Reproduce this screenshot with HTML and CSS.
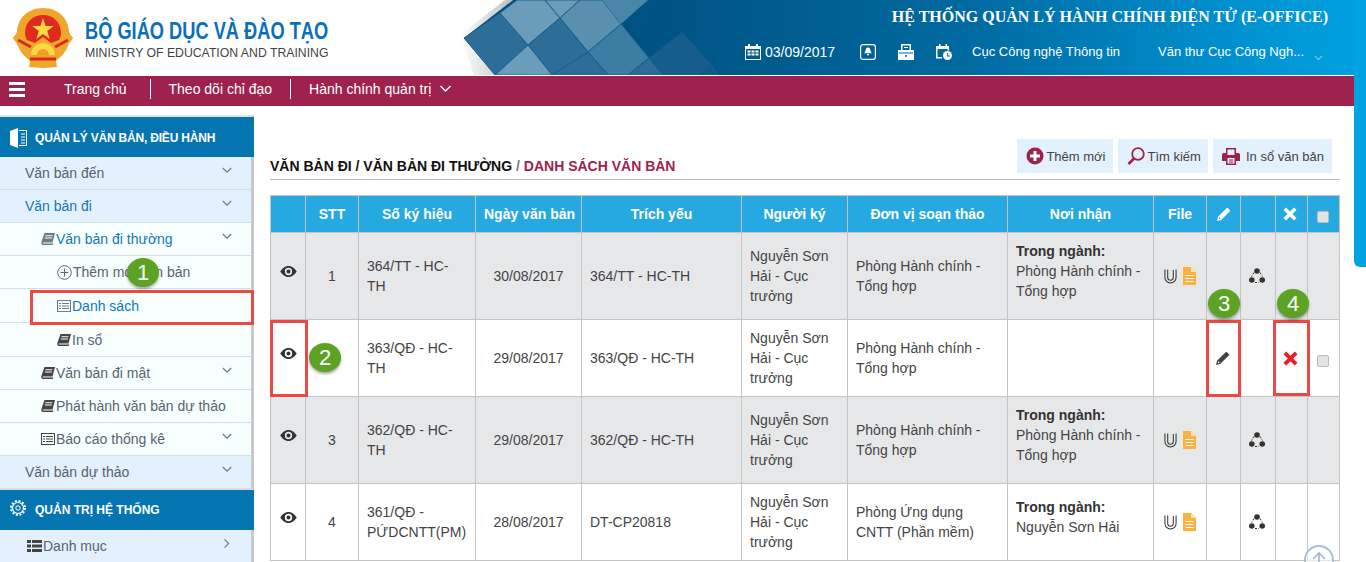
FILE: index.html
```html
<!DOCTYPE html>
<html lang="vi">
<head>
    <meta charset="UTF-8">
    <meta name="viewport" content="width=device-width, initial-scale=1.0">
    <title>Danh sách văn bản</title>
    <link rel="stylesheet" href="styles.css">
</head>
<body>
    <svg class="defs" width="0" height="0" aria-hidden="true">
        <symbol id="i-eye" viewBox="0 0 18 12"><path fill-rule="evenodd" d="M9 0c4 0 7 3 9 6-2 3-5 6-9 6S2 9 0 6c2-3 5-6 9-6zm0 2a4 4 0 1 0 0 8 4 4 0 0 0 0-8zm0 1.8a2.2 2.2 0 1 1 0 4.4 2.2 2.2 0 0 1 0-4.4z"/></symbol>
        <symbol id="i-pencil" viewBox="0 0 14 14"><path d="M0 14l1-4.2L9.600 1.200a1 1 0 0 1 1.400 0l1.800 1.800a1 1 0 0 1 0 1.400L4.200 13zM2.300 10.200l-.6 2.100 2.100-.6z"/></symbol>
        <symbol id="i-times" viewBox="0 0 14 14"><path d="M3 .5L7 4.500 11 .5l2.500 2.500-4 4 4 4-2.500 2.500-4-4-4 4L.5 11l4-4-4-4z"/></symbol>
        <symbol id="i-clip" viewBox="0 0 14 16"><path fill="none" stroke="#333" stroke-width="1.100" d="M1 1v8.500a6 6 0 0 0 12 0V1M4 1v8.500a3 3 0 0 0 6 0V1.500"/></symbol>
        <symbol id="i-doc" viewBox="0 0 13 18"><path fill="#fbb040" d="M0 0h8l5 5v13H0z"/><path fill="#fde3b5" d="M8 0l5 5H8z"/><path stroke="#fff" d="M2.500 8.500h8M2.500 11.500h8M2.500 14.500h8"/></symbol>
        <symbol id="i-share" viewBox="0 0 16 16"><circle cx="8" cy="3" r="2.800" fill="#333"/><circle cx="2.800" cy="12" r="2.800" fill="#333"/><circle cx="13.200" cy="12" r="2.800" fill="#333"/><path fill="none" stroke="#333" stroke-dasharray="2 1.500" d="M5 4.500L2.500 8.500M11 4.500l2.500 4M6 14.500h4"/></symbol>
        <symbol id="i-book" viewBox="0 0 14 12"><path d="M3.500 0H14l-2.500 9.500H2.200C1.600 9.500 1.500 10.500 2.200 10.500H11.500l.4-.8.300.6-.5 1.700H2C.5 12 0 10.500.4 9zM4.500 2.200l-.2 1h7l.2-1zM4 4.500l-.2 1h7l.2-1z"/></symbol>
        <symbol id="i-list" viewBox="0 0 14 12"><path fill-rule="evenodd" d="M0 0h14v12H0zm1 1v10h12V1zM2 3h2v1H2zm3 0h7v1H5zM2 5.500h2v1H2zm3 0h7v1H5zM2 8h2v1H2zm3 0h7v1H5z"/></symbol>
        <symbol id="i-chev" viewBox="0 0 12 8"><path fill="none" stroke="currentColor" stroke-width="1.400" d="M1 1l5 5 5-5"/></symbol>
    </svg>

    <div class="page">
        <header class="topbar">
            <svg class="topbar-art" width="1366" height="75" viewBox="0 0 1366 75" aria-hidden="true">
                <defs>
                    <linearGradient id="band" x1="0" x2="1" y1="0" y2="0">
                        <stop offset="0" stop-color="#004f7e"/>
                        <stop offset="0.2" stop-color="#005283"/>
                        <stop offset="0.55" stop-color="#00699f"/>
                        <stop offset="0.85" stop-color="#0090cf"/>
                        <stop offset="1" stop-color="#00a2e0"/>
                    </linearGradient>
                    <linearGradient id="shade" x1="0" x2="1" y1="0" y2="0">
                        <stop offset="0" stop-color="#ffffff"/>
                        <stop offset="1" stop-color="#bdbdbd"/>
                    </linearGradient>
                </defs>
                <path fill="url(#shade)" d="M460 35L505 0h8L464 38l32 37h-22z"/>
                <path fill="url(#band)" d="M513 0L464 38l32 37h870V0z"/>
                <g stroke="#17618f">
                    <path fill="#2d6e99" d="M464 38l36-25 28 32-33 30z"/>
                    <path fill="#6b9dbb" d="M500 13L517 0h28l15 18-32 27z"/>
                    <path fill="#6b9dbb" d="M545 0h35l-20 18z"/>
                    <path fill="#5a8fb0" d="M560 18l20-18h22l19 24-33 28z"/>
                    <path fill="#2d6e99" d="M528 45l32-27 28 34-36 23z"/>
                    <path fill="#6b9dbb" d="M495 75l33-30 24 30z"/>
                    <path fill="#3d7ca3" d="M588 52l33-28 28 34-21 17h-20z"/>
                    <path fill="#2d6e99" d="M552 75l36-23 20 23z"/>
                    <path fill="#4a86a8" d="M602 0h46l-27 24z" stroke="none"/>
                    <path fill="#2d6e99" d="M628 75l21-17 14 17z"/>
                    <path fill="#155d8a" d="M649 58l33-26 28 31-13 12h-34z" stroke="none"/>
                    <path fill="#0f5a88" d="M697 75l13-12 8 12z"/>
                </g>
            </svg>
            <a class="brand" href="#">
                <svg class="emblem" width="62" height="62" viewBox="0 0 62 62" aria-hidden="true">
                    <path fill="#eea72b" d="M31 1c16 0 25 11 26 23 0 3 3 5 4 7-1 3-4 4-5 8-3 8-9 12-12 15l1 6-14 1-14-1 1-6c-3-3-9-7-12-15-1-4-4-5-5-8 1-2 4-4 4-7C6 12 15 1 31 1z"/>
                    <path fill="#e02a20" d="M31 8c10 0 18 7 18 18 0 3-1 5-2 7l-8 3-8-6-8 6-8-3c-1-2-2-4-2-7C13 15 21 8 31 8z"/>
                    <path fill="#fbd743" d="M31 11l2.600 8h8.200l-6.600 5 2.500 8-6.700-5-6.700 5 2.500-8-6.600-5h8.200z"/>
                    <path fill="#fbd743" d="M19 48a12 12 0 0 1 24 0z"/>
                    <path fill="#f39c1f" d="M25 48a6 6 0 0 1 12 0z"/>
                    <path fill="none" stroke="#d92a20" stroke-width="3" d="M6 33l13 7M56 33l-13 7M18 52h26"/>
                </svg>
                <span class="brand-text">
                    <span class="brand-vi">BỘ GIÁO DỤC VÀ ĐÀO TẠO</span>
                    <span class="brand-en">MINISTRY OF EDUCATION AND TRAINING</span>
                </span>
            </a>
            <div class="topbar-right">
                <div class="app-title">HỆ THỐNG QUẢN LÝ HÀNH CHÍNH ĐIỆN TỬ (E-OFFICE)</div>
                <div class="topbar-info">
                    <span class="today">
                        <svg width="16" height="16" viewBox="0 0 16 16" aria-hidden="true"><path fill="#fff" fill-rule="evenodd" d="M3 0h2v2h6V0h2v2h3v14H0V2h3zM1 5v10h14V5zm1.500 1.500h3v2h-3zm4 0h3v2h-3zm4 0h3v2h-3zm-8 3h3v2h-3zm4 0h3v2h-3zm4 0h3v2h-3z"/></svg>
                        03/09/2017
                    </span>
                    <svg class="info-icon first" width="16" height="16" viewBox="0 0 16 16" aria-hidden="true"><rect x=".6" y=".6" width="14.800" height="14.800" rx="2.500" fill="none" stroke="#fff" stroke-width="1.200"/><path fill="#fff" d="M8 3.500c1.800 0 2.300 1.500 2.500 3 .2 1.200.8 2 1.300 2.700H4.200c.5-.7 1.100-1.500 1.300-2.700.2-1.500.7-3 2.500-3zM6.800 10h2.400L8 12z"/></svg>
                    <svg class="info-icon" width="16" height="16" viewBox="0 0 16 16" aria-hidden="true"><path fill="#fff" fill-rule="evenodd" d="M3 0h10v6h3v10H0V6h3zM4.500 1.500V6h7V1.500zM6 3h4v1H6zM1 9.500h14V8.500H1zM8 11a1 1 0 1 0 0 2 1 1 0 0 0 0-2z"/></svg>
                    <svg class="info-icon" width="16" height="16" viewBox="0 0 16 16" aria-hidden="true"><path fill="#fff" fill-rule="evenodd" d="M3 0h1.500v2h5V0H11v2h2v4.500h-1.500V5h-10v8H6v1.500H0V2h3z"/><circle cx="11.500" cy="11.500" r="4.500" fill="#fff"/><path fill="none" stroke="#0077ad" stroke-width="1.200" d="M11.500 9v3h2.500"/></svg>
                    <span class="org">Cục Công nghệ Thông tin</span>
                    <span class="user">Văn thư Cục Công Ngh...</span>
                    <svg class="user-chev" width="9" height="6" aria-hidden="true"><use href="#i-chev"/></svg>
                </div>
            </div>
        </header>

        <div class="wrap">
            <nav class="mainnav">
                <span class="burger"><i></i><i></i><i></i></span>
                <a href="#" class="nav-link first">Trang chủ</a>
                <a href="#" class="nav-link">Theo dõi chỉ đạo</a>
                <a href="#" class="nav-link last">Hành chính quản trị
                    <svg width="13" height="8" aria-hidden="true"><use href="#i-chev"/></svg>
                </a>
            </nav>

            <div class="body">
                <aside class="sidebar">
                    <div class="side-head first">
                        <svg width="17" height="20" viewBox="0 0 17 20" aria-hidden="true"><path fill="#fff" d="M0 3l8-3v20l-8-3z"/><path fill="none" stroke="#fff" d="M9 2.500h7.500v15H9M11 6h4M11 9h4M11 12h4M11 15h4"/></svg>
                        QUẢN LÝ VĂN BẢN, ĐIỀU HÀNH
                    </div>
                    <a href="#" class="side-item lv1">Văn bản đến<svg class="chev" width="10" height="7"><use href="#i-chev"/></svg></a>
                    <a href="#" class="side-item lv1 active">Văn bản đi<svg class="chev" width="10" height="7"><use href="#i-chev"/></svg></a>
                    <a href="#" class="side-item lv2 active">
                        <svg class="ico faded" width="14" height="12"><use href="#i-book"/></svg>Văn bản đi thường<svg class="chev" width="10" height="7"><use href="#i-chev"/></svg>
                    </a>
                    <a href="#" class="side-item lv3">
                        <svg class="ico" width="15" height="15" viewBox="0 0 15 15"><circle cx="7.500" cy="7.500" r="6.800" fill="none" stroke="#666"/><path stroke="#666" d="M7.500 3.500v8M3.500 7.500h8"/></svg>Thêm mới văn bản
                    </a>
                    <a href="#" class="side-item lv3 active">
                        <svg class="ico faded" width="14" height="12"><use href="#i-list"/></svg>Danh sách
                    </a>
                    <a href="#" class="side-item lv3">
                        <svg class="ico" width="14" height="12"><use href="#i-book"/></svg>In sổ
                    </a>
                    <a href="#" class="side-item lv2">
                        <svg class="ico" width="14" height="12"><use href="#i-book"/></svg>Văn bản đi mật<svg class="chev" width="10" height="7"><use href="#i-chev"/></svg>
                    </a>
                    <a href="#" class="side-item lv2">
                        <svg class="ico" width="14" height="12"><use href="#i-book"/></svg>Phát hành văn bản dự thảo
                    </a>
                    <a href="#" class="side-item lv2">
                        <svg class="ico" width="14" height="12"><use href="#i-list"/></svg>Báo cáo thống kê<svg class="chev" width="10" height="7"><use href="#i-chev"/></svg>
                    </a>
                    <a href="#" class="side-item lv1">Văn bản dự thảo<svg class="chev" width="10" height="7"><use href="#i-chev"/></svg></a>
                    <div class="side-head second">
                        <svg class="gear" width="16" height="16" viewBox="0 0 16 16" aria-hidden="true"><circle cx="8" cy="8" r="5.500" fill="none" stroke="#fff" stroke-width="1.200"/><circle cx="8" cy="8" r="2.200" fill="none" stroke="#fff"/><circle cx="8" cy="8" r="7" fill="none" stroke="#fff" stroke-width="2" stroke-dasharray="2 1.700"/></svg>
                        QUẢN TRỊ HỆ THỐNG
                    </div>
                    <a href="#" class="side-item lv1 has-ico">
                        <svg class="ico" width="15" height="12" viewBox="0 0 15 12"><path d="M0 0h4v3H0zm5 0h10v3H5zM0 4.500h4v3H0zm5 0h10v3H5zM0 9h4v3H0zm5 0h10v3H5z"/></svg>Danh mục<svg class="chev right" width="10" height="7"><use href="#i-chev"/></svg>
                    </a>
                </aside>

                <main class="content">
                    <div class="title-row">
                        <h1 class="crumb">VĂN BẢN ĐI / VĂN BẢN ĐI THƯỜNG <span class="sep">/</span> <span class="here">DANH SÁCH VĂN BẢN</span></h1>
                        <div class="actions">
                            <button class="btn add">
                                <svg width="18" height="18" viewBox="0 0 18 18" aria-hidden="true"><circle cx="9" cy="9" r="8.500" fill="#9e2149"/><path fill="#fff" d="M7.500 4h3v3.500H14v3h-3.500V14h-3v-3.500H4v-3h3.500z"/></svg>Thêm mới
                            </button>
                            <button class="btn search">
                                <svg width="18" height="18" viewBox="0 0 18 18" aria-hidden="true"><circle cx="11" cy="7" r="5.800" fill="none" stroke="#9e2149" stroke-width="1.800"/><path stroke="#9e2149" stroke-width="2.600" d="M7 11.500l-5.500 5.500"/></svg>Tìm kiếm
                            </button>
                            <button class="btn print">
                                <svg width="18" height="17" viewBox="0 0 18 17" aria-hidden="true"><path fill="#9e2149" fill-rule="evenodd" d="M4 0h10v5h2a2 2 0 0 1 2 2v6h-4v4H4v-4H0V7a2 2 0 0 1 2-2h2zM5.500 1.500V7h7V1.500zM5.500 10v5.500h7V10z"/><path stroke="#9e2149" d="M7 12h4M7 14h4"/></svg>In sổ văn bản
                            </button>
                        </div>
                    </div>

                    <table class="doc-table">
                        <colgroup>
                            <col class="c-eye"><col class="c-stt"><col class="c-so"><col class="c-ngay"><col class="c-trich"><col class="c-ky"><col class="c-dv"><col class="c-noi"><col class="c-file"><col class="c-sua"><col class="c-gui"><col class="c-xoa"><col class="c-chk">
                        </colgroup>
                        <thead>
                            <tr>
                                <th></th>
                                <th>STT</th>
                                <th>Số ký hiệu</th>
                                <th>Ngày văn bản</th>
                                <th>Trích yếu</th>
                                <th>Người ký</th>
                                <th>Đơn vị soạn thảo</th>
                                <th>Nơi nhận</th>
                                <th>File</th>
                                <th class="icons"><svg class="th-ico" width="14" height="14"><use href="#i-pencil"/></svg></th>
                                <th></th>
                                <th class="icons"><svg class="th-ico del-ico" width="14" height="14"><use href="#i-times"/></svg></th>
                                <th class="icons"><input type="checkbox" class="chk"></th>
                            </tr>
                        </thead>
                        <tbody>
                            <tr>
                                <td class="mid icons"><svg class="eye" width="17" height="11"><use href="#i-eye"/></svg></td>
                                <td class="mid">1</td>
                                <td>364/TT - HC-TH</td>
                                <td class="mid">30/08/2017</td>
                                <td>364/TT - HC-TH</td>
                                <td>Nguyễn Sơn Hải - Cục trưởng</td>
                                <td>Phòng Hành chính - Tổng hợp</td>
                                <td><p class="to"><b>Trong ngành:</b><br>Phòng Hành chính - Tổng hợp</p></td>
                                <td class="mid icons files"><svg width="13" height="16"><use href="#i-clip"/></svg><svg width="13" height="18"><use href="#i-doc"/></svg></td>
                                <td></td>
                                <td class="mid icons"><svg class="share" width="16" height="16"><use href="#i-share"/></svg></td>
                                <td></td>
                                <td></td>
                            </tr>
                            <tr>
                                <td class="mid icons"><svg class="eye" width="17" height="11"><use href="#i-eye"/></svg></td>
                                <td class="mid">2</td>
                                <td>363/QĐ - HC-TH</td>
                                <td class="mid">29/08/2017</td>
                                <td>363/QĐ - HC-TH</td>
                                <td>Nguyễn Sơn Hải - Cục trưởng</td>
                                <td>Phòng Hành chính - Tổng hợp</td>
                                <td></td>
                                <td></td>
                                <td class="mid icons"><svg class="edit" width="14" height="14"><use href="#i-pencil"/></svg></td>
                                <td></td>
                                <td class="mid icons"><svg class="del" width="15" height="15"><use href="#i-times"/></svg></td>
                                <td class="mid icons"><input type="checkbox" class="chk"></td>
                            </tr>
                            <tr>
                                <td class="mid icons"><svg class="eye" width="17" height="11"><use href="#i-eye"/></svg></td>
                                <td class="mid">3</td>
                                <td>362/QĐ - HC-TH</td>
                                <td class="mid">29/08/2017</td>
                                <td>362/QĐ - HC-TH</td>
                                <td>Nguyễn Sơn Hải - Cục trưởng</td>
                                <td>Phòng Hành chính - Tổng hợp</td>
                                <td><p class="to"><b>Trong ngành:</b><br>Phòng Hành chính - Tổng hợp</p></td>
                                <td class="mid icons files"><svg width="13" height="16"><use href="#i-clip"/></svg><svg width="13" height="18"><use href="#i-doc"/></svg></td>
                                <td></td>
                                <td class="mid icons"><svg class="share" width="16" height="16"><use href="#i-share"/></svg></td>
                                <td></td>
                                <td></td>
                            </tr>
                            <tr>
                                <td class="mid icons"><svg class="eye" width="17" height="11"><use href="#i-eye"/></svg></td>
                                <td class="mid">4</td>
                                <td>361/QĐ - PỨDCNTT(PM)</td>
                                <td class="mid">28/08/2017</td>
                                <td>DT-CP20818</td>
                                <td>Nguyễn Sơn Hải - Cục trưởng</td>
                                <td>Phòng Ứng dụng CNTT (Phần mềm)</td>
                                <td><p class="to"><b>Trong ngành:</b><br>Nguyễn Sơn Hải</p></td>
                                <td class="mid icons files"><svg width="13" height="16"><use href="#i-clip"/></svg><svg width="13" height="18"><use href="#i-doc"/></svg></td>
                                <td></td>
                                <td class="mid icons"><svg class="share" width="16" height="16"><use href="#i-share"/></svg></td>
                                <td></td>
                                <td></td>
                            </tr>
                        </tbody>
                    </table>
                </main>
            </div>
        </div>

        <!-- annotations drawn over the screenshot -->
        <div class="mark m1"></div>
        <div class="mark m2"></div>
        <div class="mark m3"></div>
        <div class="mark m4"></div>
        <div class="dot d1">1</div>
        <div class="dot d2">2</div>
        <div class="dot d3">3</div>
        <div class="dot d4">4</div>

        <div class="scroll-thumb"></div>
        <div class="to-top">
            <svg width="18" height="18" viewBox="0 0 18 18" aria-hidden="true"><path fill="none" stroke="#9db8cf" stroke-width="1.600" d="M9 17V2M3 8l6-6 6 6"/></svg>
        </div>
    </div>
</body>
</html>
```

FILE: styles.css
```css
* {
    box-sizing: border-box;
}
html, body {
    margin: 0;
    height: 562px;
    overflow: hidden;
}
body {
    font-family: "Liberation Sans", Arial, sans-serif;
    font-size: 14px;
    line-height: 20px;
    color: #444;
    background-color: #fff;
}
a {
    text-decoration: none;
    color: inherit;
}
.defs {
    position: absolute;
}
.page {
    position: relative;
    width: 1366px;
    height: 562px;
    overflow: hidden;
}

/* top banner */
.topbar {
    position: relative;
    height: 76px;
    display: flex;
    justify-content: space-between;
    border-bottom: 1px solid #fff;
}
.topbar-art {
    position: absolute;
    left: 0;
    top: 0;
}
.brand {
    position: relative;
    display: flex;
    padding: 7px 0 0 12px;
}
.brand-text {
    display: flex;
    flex-direction: column;
    margin-left: 11px;
    padding-top: 12px;
}
.brand-vi {
    font-weight: bold;
    font-size: 24px;
    line-height: 24px;
    color: #0b6fb8;
    white-space: nowrap;
    transform: scaleX(0.76);
    transform-origin: left center;
}
.brand-en {
    font-size: 12.25px;
    line-height: 16px;
    margin-top: 2px;
    color: #444;
    white-space: nowrap;
}
.topbar-right {
    position: relative;
    display: flex;
    flex-direction: column;
    align-items: flex-end;
    color: #fff;
}
.app-title {
    font-family: "Liberation Serif", serif;
    font-weight: bold;
    font-size: 16px;
    line-height: 20px;
    padding: 7px 38px 0 0;
}
.topbar-info {
    display: flex;
    align-items: center;
    height: 20px;
    margin-top: 15px;
    width: 621px;
}
.today {
    display: flex;
    align-items: center;
    gap: 4px;
}
.info-icon {
    margin-left: 22px;
}
.info-icon.first {
    margin-left: 25px;
}
.org {
    margin-left: 20px;
    font-size: 13px;
}
.user {
    margin-left: 38px;
    font-size: 13px;
}
.user-chev {
    margin: 12px 0 0 10px;
    color: #9fd0ea;
}

/* crimson nav */
.wrap {
    width: 1354px;
}
.mainnav {
    height: 30px;
    display: flex;
    align-items: center;
    background-color: #9e224d;
    color: #fff;
}
.burger {
    display: flex;
    flex-direction: column;
    gap: 3px;
    width: 16px;
    margin: 0 22px 4px 9px;
}
.burger i {
    display: block;
    height: 3px;
    background-color: #fff;
}
.nav-link {
    display: flex;
    align-items: center;
    height: 20px;
    margin-bottom: 4px;
    padding: 0 18px;
    border-left: 1px solid #fff;
}
.nav-link.first {
    border-left: 0;
    padding-left: 17px;
    padding-right: 23px;
}
.nav-link.last svg {
    margin-left: 8px;
    color: #fff;
}

.body {
    display: flex;
    align-items: flex-start;
}

/* left menu */
.sidebar {
    width: 254px;
    margin-top: 9px;
    border-top: 2px solid #e2e2e2;
    border-right: 3px solid #c9c9c9;
    flex-shrink: 0;
}
.side-head {
    display: flex;
    align-items: center;
    gap: 8px;
    height: 40px;
    margin-right: -3px;
    padding-left: 10px;
    background-color: #0575b2;
    color: #fff;
    font-size: 12px;
    font-weight: bold;
}
.side-head.first {
    padding-top: 1px;
    letter-spacing: -0.2px;
}
.side-head.second {
    height: 41px;
    gap: 9px;
    border-top: 1px solid #d9d9d9;
}
.side-head .gear {
    margin-bottom: 5px;
}
.side-item {
    position: relative;
    display: flex;
    align-items: center;
    height: 33px;
    border-bottom: 1px solid #d7dde2;
    color: #58636e;
    white-space: nowrap;
}
.side-item.active {
    color: #1377b5;
}
.lv1 {
    padding-left: 25px;
    background-color: #e3f0fd;
}
.lv1.has-ico {
    padding-left: 27px;
}
.lv2 {
    padding-left: 41px;
    background-color: #f7fffe;
}
.lv3 {
    padding-left: 57px;
    background-color: #f7fffe;
}
.lv3 + .lv3 {
    height: 34px;
}
.ico {
    fill: #444;
    margin-right: 1px;
    flex-shrink: 0;
}
.ico.faded {
    fill: #6e7c88;
}
.chev {
    position: absolute;
    left: 222px;
    top: 10px;
    color: #6d7a86;
}
.chev.right {
    transform: rotate(-90deg);
}

/* content */
.content {
    flex: 1;
    padding: 33px 15px 0 16px;
}
.title-row {
    display: flex;
    justify-content: space-between;
    align-items: flex-end;
    padding-bottom: 6px;
    border-bottom: 1px solid #bbb;
}
.crumb {
    margin: 0 0 -3px;
    font-size: 14px;
    line-height: 20px;
    font-weight: bold;
    color: #111;
}
.crumb .sep {
    color: #777;
}
.crumb .here {
    color: #9e224d;
}
.actions {
    display: flex;
    gap: 5px;
    margin: 0 8px 0 0;
}
.btn {
    display: flex;
    align-items: center;
    height: 34px;
    padding: 0 8px 0 9px;
    border: 0;
    background-color: #e3f0fd;
    color: #444;
    font-family: inherit;
    font-size: 13px;
    gap: 2px;
}
.btn.search {
    padding-right: 7px;
}
.btn.print {
    gap: 6px;
}

.doc-table {
    width: 1069px;
    margin-top: 15px;
    table-layout: fixed;
    border-collapse: collapse;
}
.c-eye { width: 35px; }
.c-stt { width: 53px; }
.c-so { width: 117px; }
.c-ngay { width: 106px; }
.c-trich { width: 160px; }
.c-ky { width: 106px; }
.c-dv { width: 160px; }
.c-noi { width: 146px; }
.c-file { width: 53px; }
.c-sua { width: 34px; }
.c-gui { width: 35px; }
.c-xoa { width: 32px; }
.c-chk { width: 32px; }
.doc-table th,
.doc-table td {
    padding: 8px;
    border: 1px solid #c4c4c4;
    vertical-align: middle;
}
.doc-table th {
    height: 37px;
    padding-top: 7px;
    padding-bottom: 7px;
    background-color: #26a9e1;
    color: #fff;
    font-size: 14px;
    text-align: center;
    white-space: nowrap;
}
.doc-table tbody tr:nth-child(odd) td {
    background-color: #e6e7e9;
}
.doc-table td.mid {
    text-align: center;
    padding-left: 0;
    padding-right: 0;
}
.doc-table .icons {
    line-height: 0;
    padding-left: 0;
    padding-right: 0;
}
.doc-table svg {
    vertical-align: middle;
}
.to {
    margin: 0 0 10px;
}
.to b {
    color: #333;
}
.files svg + svg {
    margin-left: 6px;
}
.eye {
    fill: #333;
    margin-top: -10px;
}
.share {
    margin-right: 3px;
}
.th-ico {
    fill: #fff;
}
.del-ico {
    margin-right: 3px;
}
.edit {
    fill: #444;
    margin-right: 2px;
}
.del {
    fill: #ee1c25;
    margin-right: 3px;
}
.chk {
    appearance: none;
    display: inline-block;
    width: 12px;
    height: 12px;
    margin: 6px 2px 0 0;
    vertical-align: middle;
    background-color: #e3e3e3;
    border: 1px solid #bbb;
    border-radius: 2px;
}

/* annotation marks */
.mark {
    position: absolute;
    border: 3px solid #ea4a45;
}
.m1 { left: 30px; top: 290px; width: 224px; height: 35px; }
.m2 { left: 270px; top: 320px; width: 38px; height: 77px; }
.m3 { left: 1206px; top: 320px; width: 35px; height: 77px; }
.m4 { left: 1273px; top: 320px; width: 37px; height: 76px; }
.dot {
    position: absolute;
    width: 32px;
    height: 29px;
    border-radius: 50%;
    background-color: #5ca224;
    color: #fff;
    font-size: 22px;
    line-height: 29px;
    text-align: center;
    box-shadow: 0 2px 3px rgba(0, 0, 0, 0.35);
}
.d1 { left: 127px; top: 258px; }
.d2 { left: 309px; top: 343px; }
.d3 { left: 1208px; top: 289px; }
.d4 { left: 1277px; top: 289px; }

.scroll-thumb {
    position: absolute;
    left: 1354px;
    top: 0;
    width: 12px;
    height: 267px;
    background-color: #00a2e0;
    border-bottom-left-radius: 6px;
}
.to-top {
    position: absolute;
    left: 1304px;
    top: 545px;
    width: 30px;
    height: 30px;
    display: flex;
    justify-content: center;
    align-items: center;
    border: 2px solid #a9c0d4;
    border-radius: 50%;
    background-color: rgba(255, 255, 255, 0.6);
}
```
